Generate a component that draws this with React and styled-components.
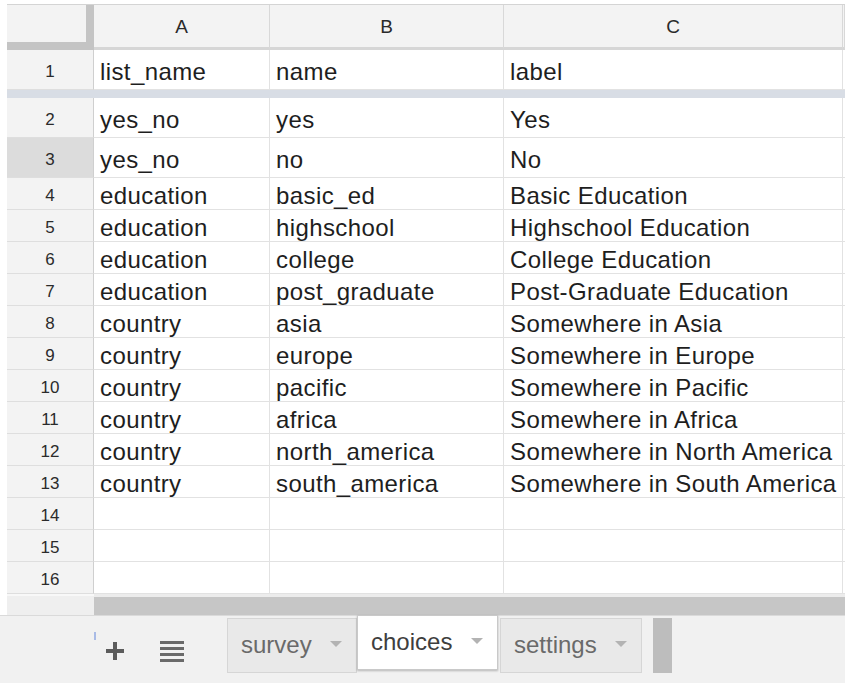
import React from 'react';
import styled, { createGlobalStyle } from 'styled-components';

const GlobalStyle = createGlobalStyle`
    html, body {
        margin: 0;
        padding: 0;
        background: #ffffff;
    }
    body {
        font-family: "Liberation Sans", Arial, sans-serif;
        width: 845px;
        height: 683px;
        overflow: hidden;
    }
    * {
        box-sizing: border-box;
    }
`;

const COLS = '87px 176px 234px 339px 1fr';

const rows = [
    ['list_name', 'name', 'label'],
    ['yes_no', 'yes', 'Yes'],
    ['yes_no', 'no', 'No'],
    ['education', 'basic_ed', 'Basic Education'],
    ['education', 'highschool', 'Highschool Education'],
    ['education', 'college', 'College Education'],
    ['education', 'post_graduate', 'Post-Graduate Education'],
    ['country', 'asia', 'Somewhere in Asia'],
    ['country', 'europe', 'Somewhere in Europe'],
    ['country', 'pacific', 'Somewhere in Pacific'],
    ['country', 'africa', 'Somewhere in Africa'],
    ['country', 'north_america', 'Somewhere in North America'],
    ['country', 'south_america', 'Somewhere in South America'],
    ['', '', ''],
    ['', '', ''],
    ['', '', ''],
];

const App = () => {
    const renderRow = (r, i) => {
        const n = i + 1;
        const tall = n <= 3;
        return (
            <Row key={n} $h={tall ? 40 : 32}>
                <RowHead $selected={n === 3}>{n}</RowHead>
                <Cell>{r[0]}</Cell>
                <Cell>{r[1]}</Cell>
                <Cell>{r[2]}</Cell>
                <Cell />
            </Row>
        );
    };

    return (
        <Page>
            <GlobalStyle />
            <Sheet>
                <HeaderRow>
                    <Corner />
                    <ColHead>A</ColHead>
                    <ColHead>B</ColHead>
                    <ColHead>C</ColHead>
                    <ColHead />
                </HeaderRow>
                {renderRow(rows[0], 0)}
                <FrozenBar />
                {rows.slice(1).map((r, i) => renderRow(r, i + 1))}
                <ScrollRow>
                    <ScrollCorner />
                    <ScrollTrack>
                        <ScrollThumb />
                    </ScrollTrack>
                </ScrollRow>
            </Sheet>
            <TabBar>
                <Controls>
                    <Tick />
                    <IconButton $ml={8}>
                        <svg width="22" height="22" viewBox="0 0 22 22">
                            <path d="M11 2v18M2 11h18" stroke="#5c5c5c" strokeWidth="4" />
                        </svg>
                    </IconButton>
                    <IconButton $ml={34}>
                        <svg width="24" height="24" viewBox="0 0 24 24">
                            <g fill="#6a6a6a">
                                <rect x="0" y="2" width="24" height="3" />
                                <rect x="0" y="8" width="24" height="3" />
                                <rect x="0" y="14" width="24" height="3" />
                                <rect x="0" y="20" width="24" height="3" />
                            </g>
                        </svg>
                    </IconButton>
                </Controls>
                <Tab $w={130}>
                    survey
                    <Caret />
                </Tab>
                <Tab $w={141} $active>
                    choices
                    <Caret />
                </Tab>
                <Tab $w={142} $ml={2}>
                    settings
                    <Caret />
                </Tab>
                <TabStub />
            </TabBar>
        </Page>
    );
};

const Page = styled.div`
    width: 845px;
    height: 683px;
    padding-top: 4px;
    display: flex;
    flex-direction: column;
    background: #ffffff;
`;

const Sheet = styled.div`
    margin-left: 7px;
    display: flex;
    flex-direction: column;
    border-top: 1px solid #d4d4d4;
`;

const HeaderRow = styled.div`
    display: grid;
    grid-template-columns: ${COLS};
    height: 45px;
    background: #f3f3f3;
`;

const Corner = styled.div`
    background: #f3f3f3;
    border-right: 8px solid #c4c4c4;
    border-bottom: 8px solid #c4c4c4;
`;

const ColHead = styled.div`
    display: flex;
    align-items: center;
    justify-content: center;
    font-size: 19px;
    color: #2a2a2a;
    border-right: 1px solid #d8d8d8;
    border-bottom: 3px solid #d6d6d6;
    padding-top: 2px;
`;

const Row = styled.div`
    display: grid;
    grid-template-columns: ${COLS};
    height: ${p => p.$h}px;
`;

const RowHead = styled.div`
    display: flex;
    align-items: center;
    justify-content: center;
    font-size: 17px;
    color: #2b2b2b;
    background: ${p => (p.$selected ? '#dcdcdc' : '#f3f3f3')};
    border-right: 1px solid #cfcfcf;
    border-bottom: 1px solid #dedede;
    padding-top: 4px;
`;

const Cell = styled.div`
    display: flex;
    align-items: center;
    padding: 4px 0 0 6px;
    font-size: 24px;
    line-height: 24px;
    letter-spacing: 0.4px;
    color: #1e1e1e;
    white-space: nowrap;
    overflow: hidden;
    border-right: 1px solid #e2e2e2;
    border-bottom: 1px solid #e2e2e2;
`;

const FrozenBar = styled.div`
    height: 8px;
    background: #d8dde5;
`;

const ScrollRow = styled.div`
    display: grid;
    grid-template-columns: 87px 1fr;
    height: 21px;
`;

const ScrollCorner = styled.div`
    background: #efefef;
    border-top: 2px solid #f8f8f8;
`;

const ScrollTrack = styled.div`
    background: #ececec;
    padding-top: 3px;
`;

const ScrollThumb = styled.div`
    height: 18px;
    background: #c6c6c6;
`;

const TabBar = styled.div`
    flex: 1;
    display: flex;
    align-items: flex-start;
    background: #f1f1f1;
    border-top: 1px solid #dadada;
`;

const Controls = styled.div`
    width: 227px;
    height: 60px;
    display: flex;
    align-items: center;
    padding-left: 94px;
`;

const Tick = styled.span`
    align-self: flex-start;
    margin-top: 16px;
    width: 2px;
    height: 8px;
    background: #a9bbe6;
`;

const IconButton = styled.span`
    display: flex;
    margin-left: ${p => p.$ml}px;
    margin-top: 10px;
`;

const Tab = styled.div`
    display: flex;
    align-items: center;
    justify-content: space-between;
    width: ${p => p.$w}px;
    height: 55px;
    margin-top: ${p => (p.$active ? -1 : 2)}px;
    margin-left: ${p => p.$ml || 0}px;
    padding: 0 14px 2px 13px;
    font-size: 24px;
    color: ${p => (p.$active ? '#3e3e3e' : '#6a6a6a')};
    background: ${p => (p.$active ? '#ffffff' : '#e9e9e9')};
    border: 1px solid ${p => (p.$active ? '#c9c9c9' : '#d6d6d6')};
    box-shadow: ${p => (p.$active ? '0 1px 2px rgba(0, 0, 0, 0.25)' : 'none')};
    position: relative;
    z-index: ${p => (p.$active ? 1 : 0)};
`;

const Caret = styled.span`
    width: 0;
    height: 0;
    border-left: 6px solid transparent;
    border-right: 6px solid transparent;
    border-top: 6px solid #b3b3b3;
    margin-top: -2px;
`;

const TabStub = styled.div`
    width: 19px;
    height: 55px;
    margin-top: 2px;
    margin-left: 11px;
    background: #bdbdbd;
`;

export default App;
